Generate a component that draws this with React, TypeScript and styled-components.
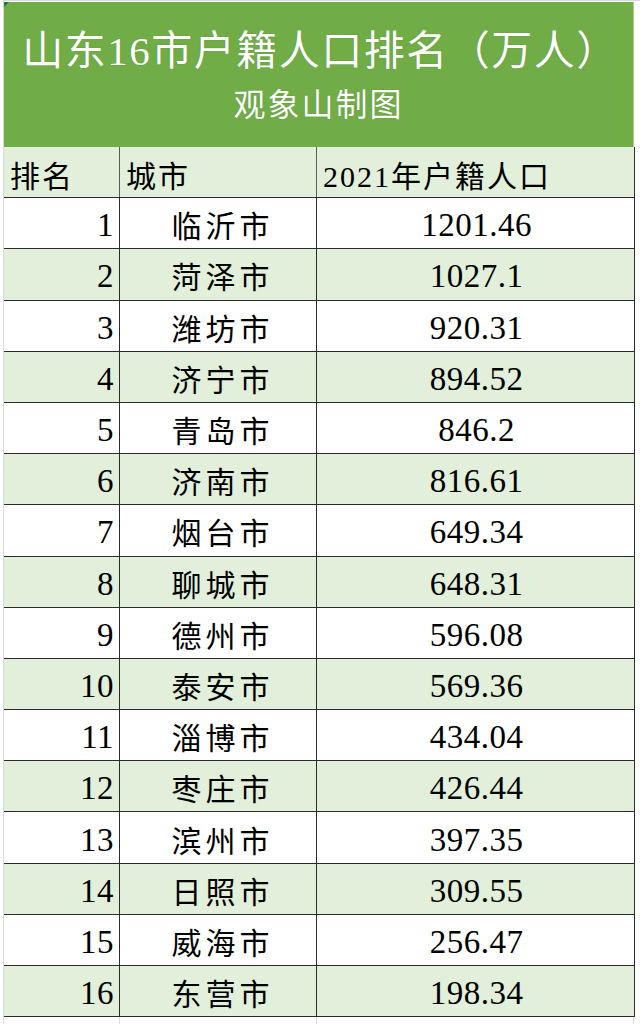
import React from 'react'
import styled, { createGlobalStyle } from 'styled-components';

const GRID = '#d5dae3';
const LINE = '#2b2b2b';
const LIGHT_GREEN = '#E2EFDA';
const GREEN = '#70AD47';
const FONT = `"Liberation Serif", "Noto Sans CJK SC", serif`;
const COLUMNS = '116px 197px 317px';

const GlobalStyle = createGlobalStyle`
  html, body {
    margin: 0;
    padding: 0;
    background: #fff;
  }
  body {
    font-family: ${FONT};
    color: #000;
  }
`;

const Sheet = styled.div`
  width: 637px;
  height: 1023px;
  margin-left: 3px;
  border-left: 1px solid ${GRID};
  border-top: 1px solid ${GRID};
  padding-top: 1px;
  display: flex;
  flex-direction: column;
  overflow: hidden;
`;

const TitleBlock = styled.div`
  position: relative;
  flex: none;
  width: 630px;
  height: 145px;
  background: ${GREEN};
  border-right: 1px solid #a9d08e;
  display: flex;
  flex-direction: column;
  align-items: center;
  color: #fff;
  text-shadow: 0 0 1px rgba(20, 40, 10, 0.35);
  box-sizing: border-box;
  padding-top: 25px;
`;

const Corner = styled.div`
  position: absolute;
  top: 0;
  left: 0;
  width: 0;
  height: 0;
  border-top: 5px solid #1f7a30;
  border-right: 5px solid transparent;
`;

const Title = styled.div`
  font-size: 41px;
  line-height: 48px;
  letter-spacing: 1.5px;
  margin-left: 4px;
`;

const SubTitle = styled.div`
  font-size: 32px;
  line-height: 36px;
  letter-spacing: 2px;
  margin-top: 12px;
`;

const Table = styled.div`
  display: flex;
  flex-direction: column;
  width: 631px;
`;

const Row = styled.div<{ $shaded: boolean }>`
  display: grid;
  grid-template-columns: ${COLUMNS};
  height: 51.2px;
  flex: none;
  box-sizing: border-box;
  border-bottom: 1px solid ${LINE};
  border-right: 1px solid ${LINE};
  background: ${({ $shaded }) => ($shaded ? LIGHT_GREEN : '#fff')};
`;

const Cell = styled.div<{ $align: 'left' | 'right' | 'center' }>`
  display: flex;
  align-items: center;
  justify-content: ${({ $align }) =>
    $align === 'left' ? 'flex-start' : $align === 'right' ? 'flex-end' : 'center'};
  box-sizing: border-box;
  border-right: 1px solid ${LINE};
  padding: 5px 5px 0 7px;
  font-size: 33px;
  letter-spacing: 0.5px;
  white-space: nowrap;
  &:last-child {
    border-right: none;
  }
`;

const HeadCell = styled(Cell)`
  font-size: 30px;
  letter-spacing: 2px;
  padding: 3px 0 0 6px;
  border-right-color: #5a5a5a;
`;

const CityCell = styled(Cell)`
  font-size: 30px;
  letter-spacing: 4px;
  padding: 2px 0 0 9px;
`;

const GridTail = styled.div`
  display: grid;
  grid-template-columns: ${COLUMNS};
  flex: 1;
`;

const GridTailCell = styled.div`
  border-right: 1px solid ${GRID};
`;

const rows: [number, string, string][] = [
  [1, '临沂市', '1201.46'],
  [2, '菏泽市', '1027.1'],
  [3, '潍坊市', '920.31'],
  [4, '济宁市', '894.52'],
  [5, '青岛市', '846.2'],
  [6, '济南市', '816.61'],
  [7, '烟台市', '649.34'],
  [8, '聊城市', '648.31'],
  [9, '德州市', '596.08'],
  [10, '泰安市', '569.36'],
  [11, '淄博市', '434.04'],
  [12, '枣庄市', '426.44'],
  [13, '滨州市', '397.35'],
  [14, '日照市', '309.55'],
  [15, '威海市', '256.47'],
  [16, '东营市', '198.34'],
];

const App = () => (
  <>
    <GlobalStyle />
    <Sheet>
      <TitleBlock>
        <Corner />
        <Title>山东16市户籍人口排名（万人）</Title>
        <SubTitle>观象山制图</SubTitle>
      </TitleBlock>
      <Table>
        <Row $shaded>
          <HeadCell $align="left">排名</HeadCell>
          <HeadCell $align="left">城市</HeadCell>
          <HeadCell $align="left">2021年户籍人口</HeadCell>
        </Row>
        {rows.map(([rank, city, value], i) => (
          <Row key={rank} $shaded={i % 2 === 1}>
            <Cell $align="right">{rank}</Cell>
            <CityCell $align="center">{city}</CityCell>
            <Cell $align="center">{value}</Cell>
          </Row>
        ))}
      </Table>
      <GridTail>
        <GridTailCell />
        <GridTailCell />
        <GridTailCell />
      </GridTail>
    </Sheet>
  </>
);

export default App
